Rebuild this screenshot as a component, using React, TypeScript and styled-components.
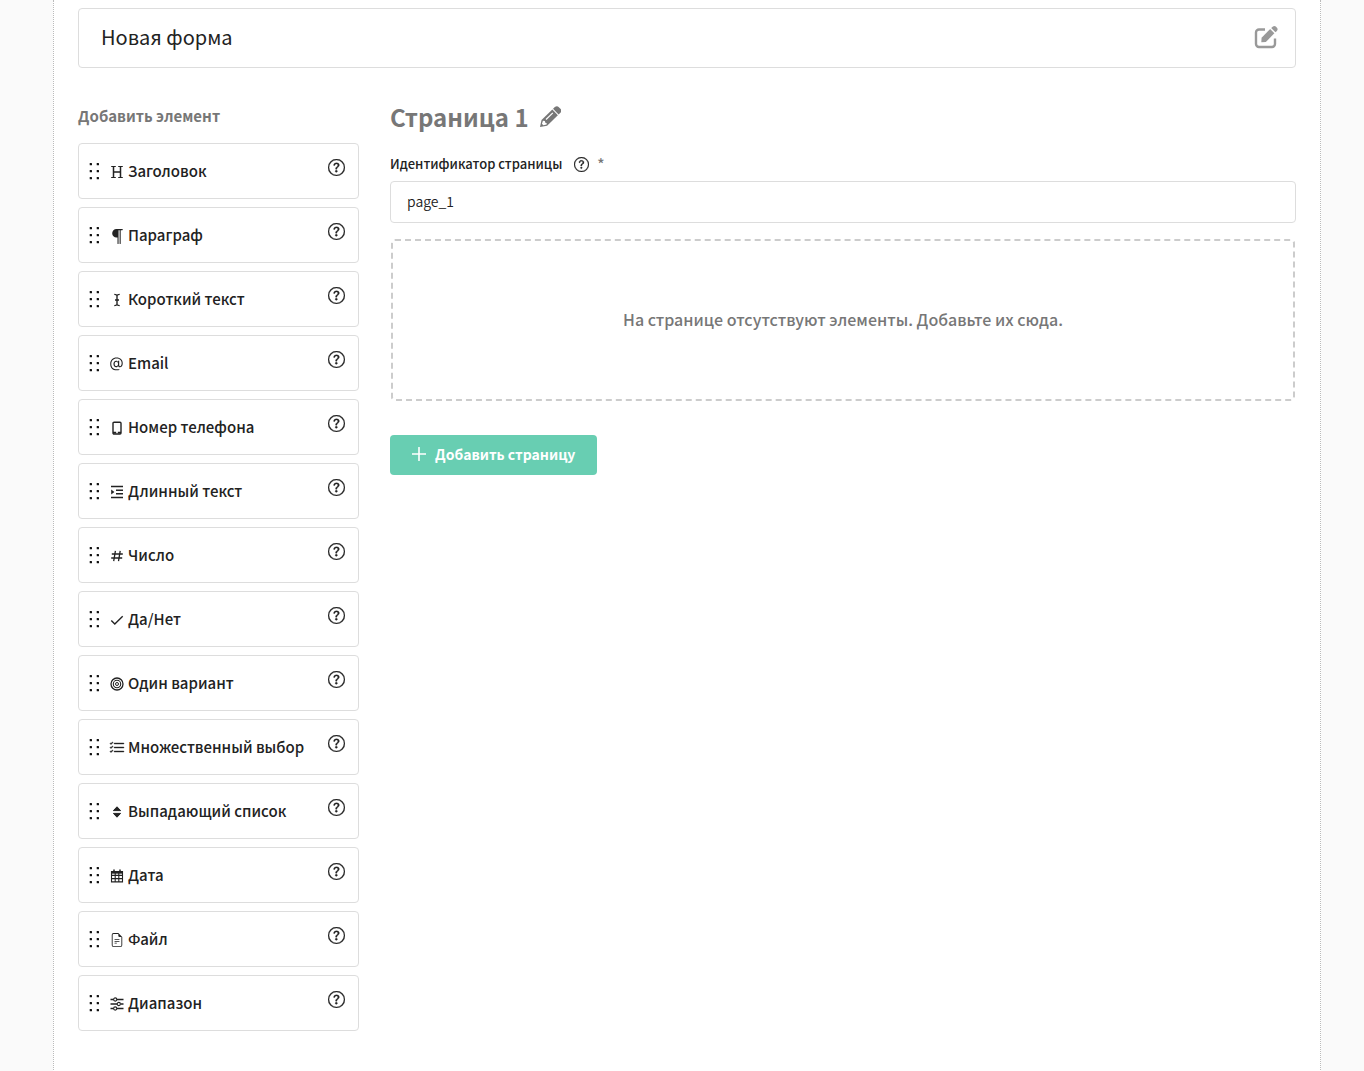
import React, { useState } from 'react';
import styled, { createGlobalStyle } from 'styled-components';
import {
  BsQuestionCircle,
  BsParagraph,
  BsAt,
  BsListCheck,
  BsFileEarmarkText,
} from 'react-icons/bs';

const GlobalStyle = createGlobalStyle`
  *, *::before, *::after { box-sizing: border-box; }
  body {
    margin: 0;
    background: #fafafa;
    color: #222;
    font-family: "Noto Sans CJK SC", "Noto Sans", sans-serif;
    font-size: 15px;
    line-height: 20px;
  }
  button, input { font: inherit; color: inherit; }
`;

const Sheet = styled.main`
  min-height: 100vh;
  margin: 0 43px 0 53px;
  padding: 8px 24px 41px;
  background: #fff;
  border: 1px dotted #bbb;
  border-width: 0 1px;
`;

const TitleBar = styled.div`
  display: flex;
  align-items: center;
  height: 60px;
  padding: 0 17px 2px 22px;
  border: 1px solid #ddd;
  border-radius: 4px;
`;

const TitleInput = styled.input`
  flex: 1;
  min-width: 0;
  padding: 0;
  border: 0;
  outline: 0;
  background: none;
  font-size: 20px;
  line-height: 32px;
`;

const IconButton = styled.button<{ $color?: string }>`
  display: flex;
  flex: none;
  padding: 0;
  border: 0;
  background: none;
  color: ${(p) => p.$color ?? '#222'};
  cursor: pointer;
`;

const Columns = styled.div`
  display: flex;
  align-items: flex-start;
  gap: 31px;
  margin-top: 31px;
`;

const Sidebar = styled.aside`
  flex: none;
  width: 281px;
`;

const SidebarTitle = styled.h2`
  margin: 0 0 11px;
  color: #777;
  font-size: 15px;
  font-weight: 700;
  line-height: 33px;
`;

const ElementList = styled.ul`
  display: flex;
  flex-direction: column;
  gap: 8px;
  margin: 0;
  padding: 0;
  list-style: none;
`;

const ElementCard = styled.li`
  display: flex;
  align-items: center;
  height: 56px;
  padding: 0 13px 0 10px;
  border: 1px solid #ddd;
  border-radius: 4px;
  background: #fff;
  font-weight: 500;
  cursor: grab;
`;

const TypeIcon = styled.span`
  display: flex;
  flex: none;
  align-items: center;
  justify-content: center;
  width: 14px;
  height: 14px;
  margin: 2px 4px 0 9px;

  svg { flex: none; }
`;

const ElementName = styled.span`
  flex: 1;
  white-space: nowrap;
`;

const CardHelp = styled(IconButton)`
  padding-bottom: 7px;
`;

const Editor = styled.section`
  flex: 1;
  min-width: 0;
`;

const PageHeading = styled.div`
  display: flex;
  align-items: center;
  gap: 10px;
`;

const PageName = styled.h1`
  margin: 0;
  color: #777;
  font-size: 24px;
  font-weight: 700;
  line-height: 36px;
`;

const FieldHead = styled.div`
  display: flex;
  align-items: center;
  margin: 20px 0 8px;
  font-size: 13px;
  font-weight: 500;
  line-height: 18px;
`;

const FieldLabel = styled.label`
  margin-right: 12px;
`;

const Required = styled.span`
  margin-left: 8px;
  color: #777;
  font-size: 15px;
`;

const TextInput = styled.input`
  display: block;
  width: 100%;
  height: 42px;
  padding: 0 16px 2px;
  border: 1px solid #ddd;
  border-radius: 4px;
  outline: 0;
  background: #fff;
  font-size: 14px;
  font-weight: 350;
`;

const DropZone = styled.div`
  display: flex;
  align-items: center;
  justify-content: center;
  height: 162px;
  margin: 16px 1px 34px;
  padding-bottom: 2px;
  border: 2px dashed #ccc;
  border-radius: 4px;
  color: #777;
  font-size: 16px;
  font-weight: 500;
`;

const AddButton = styled.button`
  display: flex;
  align-items: center;
  gap: 9px;
  height: 40px;
  padding: 0 22px 2px;
  border: 0;
  border-radius: 4px;
  background: #68ceb2;
  color: #fff;
  font-size: 14px;
  font-weight: 700;
  cursor: pointer;
`;

const Svg = ({ size = 14, children }: { size?: number; children: React.ReactNode }) => (
  <svg width={size} height={size} viewBox={`0 0 ${size} ${size}`} fill="none" stroke="currentColor" aria-hidden="true">
    {children}
  </svg>
);

const Grip = () => (
  <svg width="12" height="18" viewBox="0 0 12 18" fill="#111" aria-hidden="true">
    {[1, 8, 15].map((y) => (
      <React.Fragment key={y}>
        <rect x="0.7" y={y} width="2.3" height="2.3" rx="0.5" />
        <rect x="7.7" y={y} width="2.3" height="2.3" rx="0.5" />
      </React.Fragment>
    ))}
  </svg>
);

const HeadingIcon = () => (
  <Svg>
    <path d="M3.5 1.5v11M10.5 1.5v11M3.5 7h7" strokeWidth="1.5" />
    <path d="M1.2 1.5h4.6M8.2 1.5h4.6M1.2 12.500h4.600M8.200 12.500h4.600" strokeWidth="1" />
  </Svg>
);

const CursorIcon = () => (
  <Svg>
    <path d="M7 2.5v9M4.3 1.4c1.6 0 2.4.3 2.7 1.2.3-.9 1.1-1.2 2.7-1.2M4.3 12.6c1.6 0 2.4-.3 2.7-1.2.3.9 1.1 1.2 2.7 1.2M5 7h4" strokeWidth="1.4" />
  </Svg>
);

const TabletIcon = () => (
  <Svg>
    <rect x="3" y="1.2" width="8" height="11.8" rx="1" strokeWidth="1.4" />
    <path d="M3 11.6h3.2M7.800 11.600H11" strokeWidth="1.8" />
  </Svg>
);

const IndentIcon = () => (
  <Svg>
    <path d="M1 1.500h12M6 5.200h7M6 8.800h7M1 12.500h12" strokeWidth="1.400" />
    <path d="M1.200 4.500L4.400 7 1.200 9.500z" fill="currentColor" stroke="none" />
  </Svg>
);

const HashIcon = () => (
  <Svg>
    <path d="M5.400 1.800L3.700 12.200M10.200 1.800L8.500 12.200M1.800 5h11M1.200 9h11" strokeWidth="1.300" />
  </Svg>
);

const CheckIcon = () => (
  <Svg>
    <path d="M1.300 7.500L4.800 11L12.700 3.200" strokeWidth="1.400" />
  </Svg>
);

const TargetIcon = () => (
  <Svg>
    <circle cx="7" cy="7" r="6" strokeWidth="1.300" />
    <circle cx="7" cy="7" r="3.700" strokeWidth="1.100" />
    <circle cx="7" cy="7" r="1.500" strokeWidth="1" />
  </Svg>
);

const SortIcon = () => (
  <Svg>
    <path d="M7 1.800L10.600 5.600H3.400zM7 12.200L3.400 8.400h7.200z" fill="currentColor" strokeWidth="1" strokeLinejoin="round" />
  </Svg>
);

const CalendarIcon = () => (
  <Svg>
    <path d="M1.500 2.500h11v10.400h-11zM1.500 6.400h11M1.500 9.600h11M5.200 4v9M8.800 4v9" strokeWidth="1.100" />
    <path d="M1.500 3.700h11" strokeWidth="1.900" />
    <path d="M4 .6v2.200M10 .6v2.200" strokeWidth="1.500" />
  </Svg>
);

const SlidersIcon = () => (
  <Svg>
    <path d="M.5 2.500h3M7 2.500h6.500M.5 7h6.500M10.600 7h2.900M.5 11.500h3M7 11.500h6.500" strokeWidth="1.300" />
    <circle cx="5.200" cy="2.500" r="1.600" strokeWidth="1.100" />
    <circle cx="8.800" cy="7" r="1.600" strokeWidth="1.100" />
    <circle cx="5.200" cy="11.500" r="1.600" strokeWidth="1.100" />
  </Svg>
);

const PencilIcon = () => (
  <svg width="22" height="22" viewBox="0 0 22 22" aria-hidden="true">
    <g transform="translate(1 21) rotate(-44)">
      <path d="M0 0L6 -4H21V4H6Z" fill="#777" />
      <path d="M22 -4H24.500Q27.300 -3.800 27.300 -1.500V1.500Q27.300 3.800 24.500 4H22Z" fill="#777" />
      <path d="M3.600 -0.900L6.400 -2.400L7.600 -0.900L6.800 0.900L7.600 2L6.400 2.800L3.600 1Z" fill="#fff" />
      <path d="M9.500 -1.200H19" stroke="#fff" strokeWidth="1.200" />
    </g>
  </svg>
);

const EditIcon = () => (
  <svg width="24" height="24" viewBox="0 0 24 24" fill="none" aria-hidden="true">
    <path d="M11 4.500H5a3 3 0 0 0-3 3V19a3 3 0 0 0 3 3h13a3 3 0 0 0 3-3v-5.500" stroke="currentColor" strokeWidth="2.400" />
    <g transform="translate(7.300 17.200) rotate(-45)" fill="currentColor">
      <path d="M0 0L3.400 -3H15.500V3H3.400Z" />
      <path d="M17 -3H19Q21.300 -2.800 21.300 -.8V.8Q21.300 2.800 19 3H17Z" />
    </g>
  </svg>
);

const PlusIcon = () => (
  <Svg>
    <path d="M7 .5v13M.5 7h13" strokeWidth="1.600" strokeLinecap="round" />
  </Svg>
);

const ELEMENTS: { name: string; icon: React.ReactNode }[] = [
  { name: 'Заголовок', icon: <HeadingIcon /> },
  { name: 'Параграф', icon: <BsParagraph size={17} /> },
  { name: 'Короткий текст', icon: <CursorIcon /> },
  { name: 'Email', icon: <BsAt size={18} /> },
  { name: 'Номер телефона', icon: <TabletIcon /> },
  { name: 'Длинный текст', icon: <IndentIcon /> },
  { name: 'Число', icon: <HashIcon /> },
  { name: 'Да/Нет', icon: <CheckIcon /> },
  { name: 'Один вариант', icon: <TargetIcon /> },
  { name: 'Множественный выбор', icon: <BsListCheck size={16} strokeWidth={0.4} /> },
  { name: 'Выпадающий список', icon: <SortIcon /> },
  { name: 'Дата', icon: <CalendarIcon /> },
  { name: 'Файл', icon: <BsFileEarmarkText size={14} /> },
  { name: 'Диапазон', icon: <SlidersIcon /> },
];

export default function App() {
  const [title, setTitle] = useState('Новая форма');
  const [pageId, setPageId] = useState('page_1');

  return (
    <>
      <GlobalStyle />
      <Sheet>
        <TitleBar>
          <TitleInput aria-label="Название формы" value={title} onChange={(e) => setTitle(e.target.value)} />
          <IconButton type="button" aria-label="Изменить название" $color="#999">
            <EditIcon />
          </IconButton>
        </TitleBar>
        <Columns>
          <Sidebar>
            <SidebarTitle>Добавить элемент</SidebarTitle>
            <ElementList>
              {ELEMENTS.map(({ name, icon }) => (
                <ElementCard key={name}>
                  <Grip />
                  <TypeIcon>{icon}</TypeIcon>
                  <ElementName>{name}</ElementName>
                  <CardHelp type="button" aria-label={`Справка: ${name}`}>
                    <BsQuestionCircle size={17} strokeWidth={0.3} />
                  </CardHelp>
                </ElementCard>
              ))}
            </ElementList>
          </Sidebar>
          <Editor>
            <PageHeading>
              <PageName>Страница 1</PageName>
              <IconButton type="button" aria-label="Переименовать страницу">
                <PencilIcon />
              </IconButton>
            </PageHeading>
            <FieldHead>
              <FieldLabel htmlFor="page-id">Идентификатор страницы</FieldLabel>
              <IconButton type="button" aria-label="Справка: идентификатор страницы">
                <BsQuestionCircle size={15} strokeWidth={0.3} />
              </IconButton>
              <Required>*</Required>
            </FieldHead>
            <TextInput id="page-id" required value={pageId} onChange={(e) => setPageId(e.target.value)} />
            <DropZone>На странице отсутствуют элементы. Добавьте их сюда.</DropZone>
            <AddButton type="button">
              <PlusIcon />
              Добавить страницу
            </AddButton>
          </Editor>
        </Columns>
      </Sheet>
    </>
  );
}
